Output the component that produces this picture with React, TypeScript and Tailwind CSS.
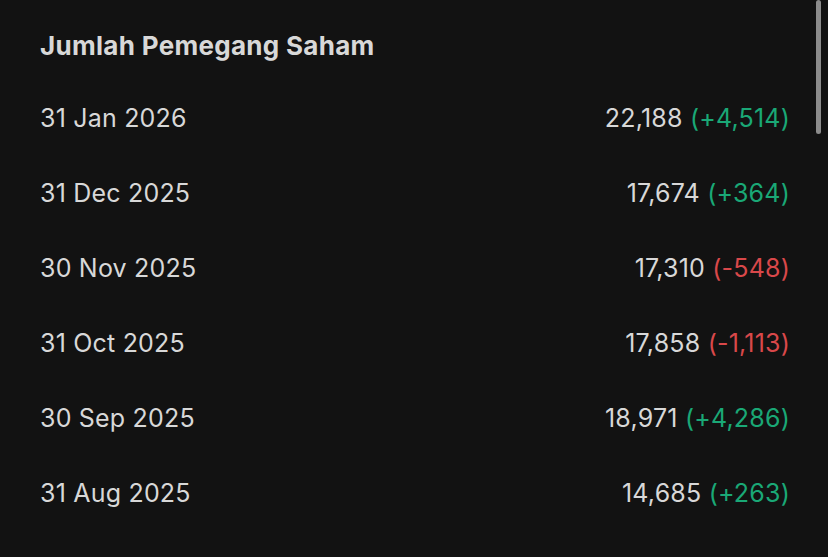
import React from 'react';

const rows = [
  { date: '31 Jan 2026', value: '22,188', change: '+4,514' },
  { date: '31 Dec 2025', value: '17,674', change: '+364' },
  { date: '30 Nov 2025', value: '17,310', change: '-548' },
  { date: '31 Oct 2025', value: '17,858', change: '-1,113' },
  { date: '30 Sep 2025', value: '18,971', change: '+4,286' },
  { date: '31 Aug 2025', value: '14,685', change: '+263' },
];

export default function App() {
  return (
    <div
      className="relative w-[828px] h-[557px] overflow-hidden bg-[#121212] text-[#d8d8d8]"
      style={{ fontFamily: 'Inter, "Noto Sans", sans-serif' }}
    >
      {/* scrollbar thumb */}
      <div className="absolute right-[7px] top-0 w-[5px] h-[134px] rounded-full bg-[#8c8c8c]" />

      <div className="pl-10 pr-[38px] pt-[21px]">
        <h2 className="h-12 flex items-center text-[26px] font-bold tracking-[0.3px]">
          Jumlah Pemegang Saham
        </h2>
        <div className="mt-3">
          {rows.map((r) => {
            const up = r.change.startsWith('+');
            return (
              <div
                key={r.date}
                className="h-[75px] flex items-center justify-between text-[25px] tracking-[0.2px]"
              >
                <span>{r.date}</span>
                <span>
                  {r.value}{' '}
                  <span className={up ? 'text-[#1aa876]' : 'text-[#d9484a]'}>({r.change})</span>
                </span>
              </div>
            );
          })}
        </div>
      </div>
    </div>
  );
}
